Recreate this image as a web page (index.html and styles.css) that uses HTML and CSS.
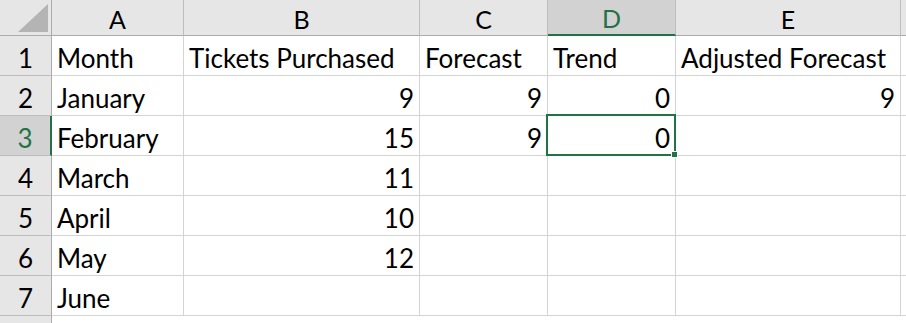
FILE: index.html
```html
<!DOCTYPE html>
<html>
<head>
<meta charset="utf-8">
<link rel="stylesheet" href="styles.css">
</head>
<body>
<div class="sheet">
  <div class="corner"><span class="tri"></span></div>
  <div class="colhead">A</div>
  <div class="colhead">B</div>
  <div class="colhead">C</div>
  <div class="colhead sel">D</div>
  <div class="colhead">E</div>
  <div class="colhead last"></div>

  <div class="rowhead">1</div>
  <div class="cell">Month</div>
  <div class="cell">Tickets Purchased</div>
  <div class="cell">Forecast</div>
  <div class="cell">Trend</div>
  <div class="cell">Adjusted Forecast</div>
  <div class="cell"></div>

  <div class="rowhead">2</div>
  <div class="cell">January</div>
  <div class="cell num">9</div>
  <div class="cell num">9</div>
  <div class="cell num">0</div>
  <div class="cell num">9</div>
  <div class="cell"></div>

  <div class="rowhead sel">3</div>
  <div class="cell">February</div>
  <div class="cell num">15</div>
  <div class="cell num">9</div>
  <div class="cell num active">0</div>
  <div class="cell"></div>
  <div class="cell"></div>

  <div class="rowhead">4</div>
  <div class="cell">March</div>
  <div class="cell num">11</div>
  <div class="cell"></div>
  <div class="cell"></div>
  <div class="cell"></div>
  <div class="cell"></div>

  <div class="rowhead">5</div>
  <div class="cell">April</div>
  <div class="cell num">10</div>
  <div class="cell"></div>
  <div class="cell"></div>
  <div class="cell"></div>
  <div class="cell"></div>

  <div class="rowhead">6</div>
  <div class="cell">May</div>
  <div class="cell num">12</div>
  <div class="cell"></div>
  <div class="cell"></div>
  <div class="cell"></div>
  <div class="cell"></div>

  <div class="rowhead">7</div>
  <div class="cell">June</div>
  <div class="cell"></div>
  <div class="cell"></div>
  <div class="cell"></div>
  <div class="cell"></div>
  <div class="cell"></div>
</div>
</body>
</html>
```

FILE: styles.css
```css
html, body {
  margin: 0;
  padding: 0;
  background: #ffffff;
  overflow: hidden;
}

.sheet {
  display: grid;
  grid-template-columns: 52px 132px 236px 128px 128px 225px 1fr;
  grid-template-rows: 36px repeat(7, 40px) 8px;
  width: 906px;
  font-family: Lato, "Liberation Sans", sans-serif;
  font-size: 26px;
  color: #000;
}

.sheet::after {
  content: "";
  grid-column: 1;
  grid-row: 9;
  background: #e6e6e6;
  border-right: 1px solid #ababab;
}

.sheet > div {
  box-sizing: border-box;
  border-right: 1px solid #d4d4d4;
  border-bottom: 1px solid #d4d4d4;
  white-space: nowrap;
  overflow: visible;
}

.corner {
  background: #e6e6e6;
  border-right-color: #ababab !important;
  border-bottom-color: #ababab !important;
  position: relative;
}

.tri {
  position: absolute;
  right: 3px;
  bottom: 3px;
  width: 0;
  height: 0;
  border-left: 30px solid transparent;
  border-bottom: 28px solid #b4b4b4;
}

.colhead {
  background: #e6e6e6;
  border-right-color: #bdbdbd !important;
  border-bottom-color: #ababab !important;
  text-align: center;
  line-height: 36px;
  padding-top: 1px;
  font-size: 25px;
}

.colhead.sel {
  background: #d2d2d2;
  color: #217346;
  border-bottom: 2px solid #217346 !important;
  line-height: 34px;
}

.rowhead {
  background: #e6e6e6;
  border-right-color: #ababab !important;
  border-bottom-color: #bdbdbd !important;
  text-align: center;
  line-height: 40px;
  padding-top: 2px;
}

.rowhead.sel {
  background: #d2d2d2;
  color: #217346;
  border-right: 2px solid #217346 !important;
}

.cell {
  padding: 2px 5px 0;
  line-height: 40px;
}

.num {
  text-align: right;
}

.active {
  position: relative;
}

.active::before {
  content: "";
  position: absolute;
  left: -2px;
  top: -2px;
  right: -1px;
  bottom: -1px;
  border: 2px solid #217346;
  pointer-events: none;
}

.active::after {
  content: "";
  position: absolute;
  right: -3px;
  bottom: -3px;
  width: 5px;
  height: 5px;
  background: #217346;
  border: 1px solid #ffffff;
  box-sizing: content-box;
}
```
